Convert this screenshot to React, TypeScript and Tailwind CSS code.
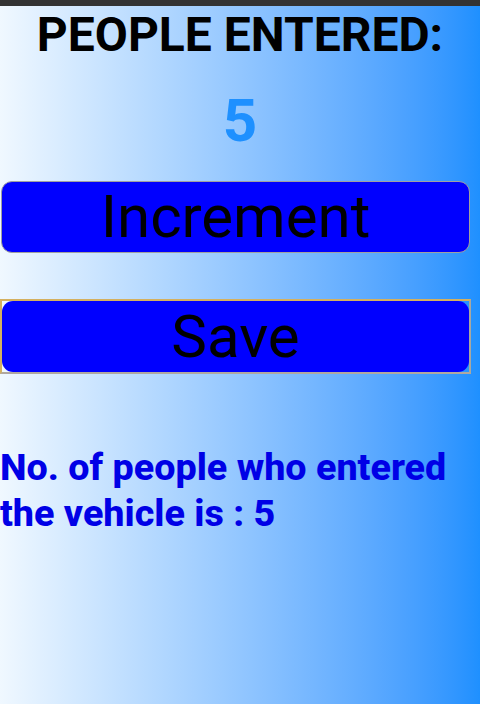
import React from "react";

export default function App() {
  return (
    <div
      className="w-[480px] h-[704px] flex flex-col bg-gradient-to-r from-[#f0f8ff] to-[#1e90ff]"
      style={{ fontFamily: "Roboto, 'Noto Sans', sans-serif" }}
    >
      <div className="h-[6px] bg-[#333333] shrink-0" />
      <div className="text-center font-bold text-black text-[48px] leading-[56px] mt-[1px]">
        PEOPLE ENTERED:
      </div>
      <div className="text-center font-bold text-[#1e90ff] text-[60px] leading-[70px] mt-[23px]">
        5
      </div>
      <button className="mt-[25px] ml-[1px] w-[469px] h-[72px] bg-[#0000ff] rounded-[11px] border border-[#a0a0a0] text-black text-[60px] leading-none flex items-center justify-center">
        Increment
      </button>
      <div className="mt-[46px] w-[471px] h-[75px] border-2 border-[#d4b060] border-r-[#a8a8a0] border-b-[#b0a8a0] flex">
        <button className="w-full h-full bg-[#0000ff] rounded-[11px] text-black text-[60px] leading-none flex items-center justify-center">
          Save
        </button>
      </div>
      <div className="mt-[70px] font-extrabold text-[#0000e6] text-[37.7px] leading-[46px]">
        No. of people who entered the vehicle is : 5
      </div>
    </div>
  );
}
